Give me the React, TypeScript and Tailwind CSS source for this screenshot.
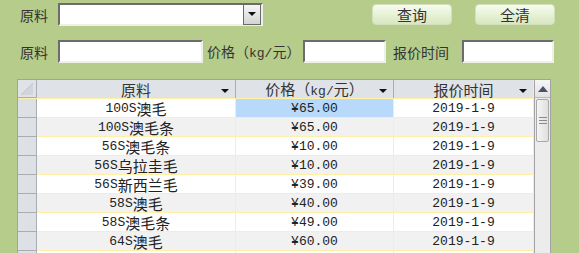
import React from "react";

type Row = { name: string; price: string; date: string };

const rows: Row[] = [
  { name: "100S澳毛", price: "¥65.00", date: "2019-1-9" },
  { name: "100S澳毛条", price: "¥65.00", date: "2019-1-9" },
  { name: "56S澳毛条", price: "¥10.00", date: "2019-1-9" },
  { name: "56S乌拉圭毛", price: "¥10.00", date: "2019-1-9" },
  { name: "56S新西兰毛", price: "¥39.00", date: "2019-1-9" },
  { name: "58S澳毛", price: "¥40.00", date: "2019-1-9" },
  { name: "58S澳毛条", price: "¥49.00", date: "2019-1-9" },
  { name: "64S澳毛", price: "¥60.00", date: "2019-1-9" },
  // next row only shows its top line in the window
  { name: "", price: "", date: "" },
];

// half-width chars in a mono font, CJK chars a bit larger (looks like SimSun)
function Mixed({ text }: { text: string }) {
  const parts = text.split(/([\x20-\x7e\u00a5]+)/).filter(Boolean);
  return (
    <>
      {parts.map((p, i) =>
        /^[\x20-\x7e\u00a5]+$/.test(p) ? (
          <span key={i} className="font-['Liberation_Mono',monospace] text-[13px]">
            {p}
          </span>
        ) : (
          <span key={i} className="text-[15px]">
            {p}
          </span>
        )
      )}
    </>
  );
}

function SmallArrow() {
  return (
    <svg width="8" height="5" viewBox="0 0 8 5" className="shrink-0">
      <polygon points="0,0 8,0 4,4" fill="#111" />
    </svg>
  );
}

const inputCls =
  "h-[23px] bg-white border-2 border-t-[#6c6c6c] border-l-[#6c6c6c] border-b-[#eef2e6] border-r-[#eef2e6]";

function GreenButton({ label }: { label: string }) {
  return (
    <button
      type="button"
      className="w-[80px] h-[21px] rounded-[4px] border border-[#d3dfbd] bg-gradient-to-b from-[#f7fbf0] to-[#d8e7bf] text-[15px] leading-none text-[#333] flex items-center justify-center"
    >
      {label}
    </button>
  );
}

function HeaderCell({ label, w, last }: { label: string; w: string; last?: boolean }) {
  return (
    <div
      className={`${w} h-full relative flex items-center justify-center bg-[#dfe3e8] text-[#333] ${
        last ? "border-r border-r-[#fff0a8]" : "border-r border-r-[#a9adb3]"
      }`}
    >
      <span className="leading-none">
        <Mixed text={label} />
      </span>
      <div className="absolute right-[6px] top-[9px]">
        <SmallArrow />
      </div>
    </div>
  );
}

export default function App() {
  return (
    <div className="w-[579px] h-[253px] overflow-hidden bg-[#b6cc8a] font-['Noto_Sans_CJK_SC',sans-serif] text-[#333]">
      {/* row 1: select + buttons */}
      <div className="flex items-center pt-[3px] h-[26px]">
        <div className="w-[38px] ml-[20px] text-[14px] leading-none">原料</div>
        <div className={`${inputCls} w-[205px] h-[23px] flex justify-end items-center`}>
          <div className="w-[18px] h-[21px] border border-[#6a6a6a] bg-gradient-to-b from-[#f6f6f6] to-[#d4d4d4] flex items-center justify-center">
            <SmallArrow />
          </div>
        </div>
        <div className="ml-[109px] self-start mt-[1px]">
          <GreenButton label="查询" />
        </div>
        <div className="ml-[23px] self-start mt-[1px]">
          <GreenButton label="全清" />
        </div>
      </div>

      {/* row 2: filters */}
      <div className="flex items-center mt-[14px] h-[23px]">
        <div className="w-[38px] ml-[20px] text-[14px] leading-none">原料</div>
        <div className={`${inputCls} w-[145px]`} />
        <div className="ml-[4px] w-[96px] text-[14px] leading-none whitespace-nowrap">
          价格（<span className="font-['Liberation_Mono',monospace] text-[13px]">kg/</span>元）
        </div>
        <div className={`${inputCls} w-[83px]`} />
        <div className="ml-[7px] w-[62px] text-[14px] leading-none">报价时间</div>
        <div className={`${inputCls} w-[92px] ml-[7px]`} />
      </div>

      {/* grid */}
      <div className="mt-[16px] ml-[17px] w-[534px] h-[200px] border border-[#a3a3a3] bg-[#f0f0f0] flex">
        <div className="flex-1 flex flex-col">
          <div className="h-[19px] flex border-b border-b-[#fff0a8]">
            <div className="w-[19px] h-full bg-[#dfe3e8] border-r border-r-[#a9adb3] border-b border-b-[#a9adb3] flex items-end justify-center pb-[2px]">
              <svg width="12" height="12" viewBox="0 0 12 12">
                <polygon points="12,0 12,12 0,12" fill="#d0d5dc" />
                <line x1="12" y1="0" x2="0" y2="12" stroke="#b4c8dc" strokeWidth="1" />
              </svg>
            </div>
            <HeaderCell label="原料" w="w-[199px]" />
            <HeaderCell label="价格（kg/元）" w="w-[158px]" />
            <HeaderCell label="报价时间" w="w-[140px]" last />
          </div>
          {rows.map((r, i) => (
            <div key={i} className="h-[19px] flex shrink-0">
              <div className="w-[19px] h-full bg-[#dde1e6] border-r border-r-[#a9adb3] border-b border-b-[#a9adb3]" />
              <div
                className={`flex h-full border-b border-b-[#fff0a8] text-[#222] ${
                  i % 2 === 0 ? "bg-white" : "bg-[#f1f1f1]"
                }`}
              >
                <div className="w-[199px] h-full border-r border-r-[#fff0a8] flex items-center justify-center leading-none">
                  <Mixed text={r.name} />
                </div>
                <div
                  className={`w-[158px] h-full border-r border-r-[#fff0a8] flex items-center justify-center leading-none ${
                    i === 0 ? "bg-[#b8d9f9]" : ""
                  }`}
                >
                  <Mixed text={r.price} />
                </div>
                <div className="w-[140px] h-full border-r border-r-[#fff0a8] flex items-center justify-center leading-none">
                  <Mixed text={r.date} />
                </div>
              </div>
            </div>
          ))}
        </div>

        {/* vertical scrollbar */}
        <div className="w-[16px] h-full border-l border-l-[#a3a3a3] bg-[#ececec] flex flex-col">
          <div className="h-[18px] bg-gradient-to-b from-[#f6f6f6] to-[#e2e2e2] border-b border-b-[#b8b8b8] flex items-center justify-center">
            <svg width="10" height="6" viewBox="0 0 10 6">
              <polygon points="0,6 10,6 5,0" fill="#46546e" />
            </svg>
          </div>
          <div className="mt-[1px] mx-[1px] h-[43px] rounded-[2px] border border-[#a8a8a8] bg-gradient-to-r from-[#f4f4f4] to-[#e0e0e0] flex flex-col items-center justify-center gap-[2px]">
            <div className="w-[8px] h-[1px] bg-[#8a8a8a]" />
            <div className="w-[8px] h-[1px] bg-[#8a8a8a]" />
            <div className="w-[8px] h-[1px] bg-[#8a8a8a]" />
          </div>
        </div>
      </div>
    </div>
  );
}
